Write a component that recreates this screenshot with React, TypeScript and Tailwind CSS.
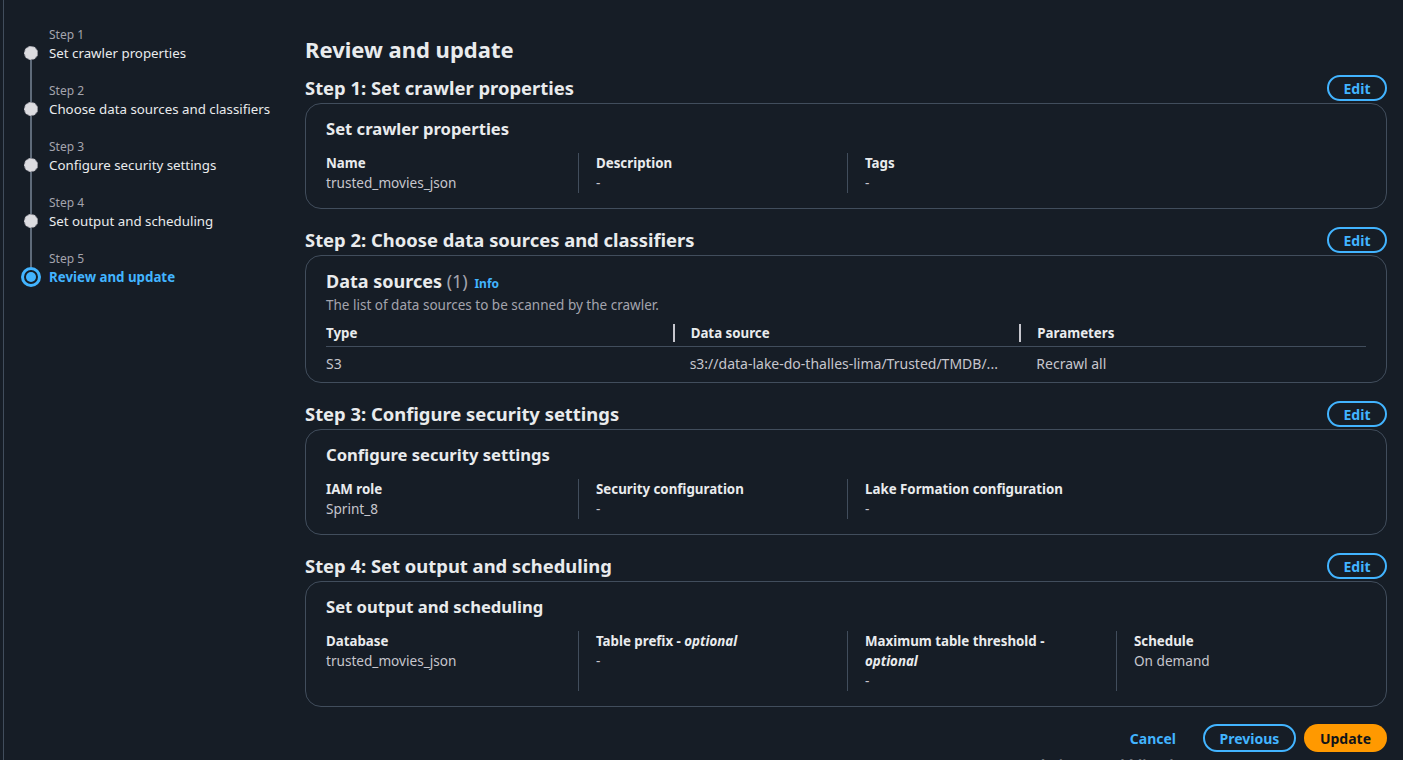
const steps = [
  { label: 'Step 1', title: 'Set crawler properties' },
  { label: 'Step 2', title: 'Choose data sources and classifiers' },
  { label: 'Step 3', title: 'Configure security settings' },
  { label: 'Step 4', title: 'Set output and scheduling' },
  { label: 'Step 5', title: 'Review and update' },
];

type KV = { label: React.ReactNode; value: string };

function KeyValues({ items }: { items: KV[] }) {
  return (
    <div className="mt-[13px] grid grid-cols-[252px_269px_269px_1fr]">
      {items.map((item, idx) => (
        <div key={idx} className={idx === 0 ? 'pr-[17px]' : 'border-l border-[#414d5c] pl-[17px] pr-[17px]'}>
          <div className="text-[13.3px] leading-[20px] font-bold text-[#e9ebed]">{item.label}</div>
          <div className="text-[13.6px] leading-[20px] text-[#c6c6cd]">{item.value}</div>
        </div>
      ))}
    </div>
  );
}

function Section({ title, children, first }: { title: string; children: React.ReactNode; first?: boolean }) {
  return (
    <section className={first ? 'mt-[10px]' : 'mt-[18px]'}>
      <div className="flex h-[26px] items-center justify-between">
        <h2 className="text-[18.4px] leading-[22px] font-bold text-[#e9ebed]">{title}</h2>
        <button className="h-[26px] w-[60px] rounded-full border-2 border-[#42b4ff] text-[14px] font-bold text-[#42b4ff]">
          Edit
        </button>
      </div>
      <div className="mt-[2px] rounded-[16px] border border-[#414d5c] px-[20px]">{children}</div>
    </section>
  );
}

function CardTitle({ children }: { children: React.ReactNode }) {
  return <h3 className="text-[16.6px] leading-[22px] font-bold text-[#e9ebed]">{children}</h3>;
}

export default function App() {
  return (
    <div
      className="relative flex h-[760px] w-full overflow-hidden bg-[#161d26] pl-[3px] text-[#c6c6cd]"
      style={{ fontFamily: '"Noto Sans", "Open Sans", Arial, sans-serif' }}
    >
      <div className="flex flex-1 border-l border-[#414d5c]">
        {/* Wizard navigation */}
        <nav className="w-[301px] shrink-0 pl-[17px] pt-[26px]">
          {steps.map((step, idx) => {
            const active = idx === steps.length - 1;
            return (
              <div key={step.label} className="flex gap-[8px]">
                <div className="flex w-[20px] flex-col items-center">
                  <div className={`h-[17px] w-[2px] ${idx > 0 ? 'bg-[#5f6b7a]' : ''}`} />
                  <div className="flex h-[20px] flex-col items-center">
                    {active ? (
                      <div className="flex h-[20px] w-[20px] items-center justify-center rounded-full border-[3px] border-[#42b4ff]">
                        <div className="h-[10px] w-[10px] rounded-full bg-[#42b4ff]" />
                      </div>
                    ) : (
                      <>
                        <div className={`h-[3px] w-[2px] ${idx > 0 ? 'bg-[#5f6b7a]' : ''}`} />
                        <div className="h-[14px] w-[14px] rounded-full border border-dashed border-[#9a9aa3] bg-[#dcdce0]" />
                        <div className="h-[3px] w-[2px] bg-[#5f6b7a]" />
                      </>
                    )}
                  </div>
                  {!active && <div className="h-[19px] w-[2px] bg-[#5f6b7a]" />}
                </div>
                <div>
                  <div className="text-[12px] leading-[17px] text-[#a4a4ad]">{step.label}</div>
                  <div
                    className={`text-[13.3px] leading-[20px] ${active ? 'font-bold text-[#42b4ff]' : 'text-[#e9ebed]'}`}
                  >
                    {step.title}
                  </div>
                  {!active && <div className="h-[19px]" />}
                </div>
              </div>
            );
          })}
        </nav>

        {/* Main content */}
        <main className="w-[1082px] pt-[33px]">
          <h1 className="text-[22px] leading-[32px] font-bold text-[#e9ebed]">Review and update</h1>

          <Section title="Step 1: Set crawler properties" first>
            <div className="pt-[14px] pb-[15px]">
              <CardTitle>Set crawler properties</CardTitle>
              <KeyValues
                items={[
                  { label: 'Name', value: 'trusted_movies_json' },
                  { label: 'Description', value: '-' },
                  { label: 'Tags', value: '-' },
                ]}
              />
            </div>
          </Section>

          <Section title="Step 2: Choose data sources and classifiers">
            <div className="pt-[14px] pb-[2px]">
              <h3 className="text-[18px] leading-[22px] font-bold text-[#e9ebed]">
                Data sources <span className="font-normal text-[#a4a4ad]">(1)</span>{' '}
                <span className="ml-[2px] text-[12px] font-bold text-[#42b4ff]">Info</span>
              </h3>
              <p className="text-[13.5px] leading-[20px] text-[#a4a4ad]">
                The list of data sources to be scanned by the crawler.
              </p>
              <table className="mt-[4px] w-full table-fixed text-left text-[14px] leading-[20px]">
                <thead>
                  <tr className="border-b border-[#414d5c]">
                    <th className="pt-[4px] pb-[3px] text-[13.3px] font-bold text-[#e9ebed]">Type</th>
                    <th className="pt-[4px] pb-[3px] text-[13.3px] font-bold text-[#e9ebed]">
                      <div className="flex items-center">
                        <span className="mr-[16px] h-[18px] w-[2px] bg-[#c6c6cd]" />
                        Data source
                      </div>
                    </th>
                    <th className="pt-[4px] pb-[3px] text-[13.3px] font-bold text-[#e9ebed]">
                      <div className="flex items-center">
                        <span className="mr-[16px] h-[18px] w-[2px] bg-[#c6c6cd]" />
                        Parameters
                      </div>
                    </th>
                  </tr>
                </thead>
                <tbody>
                  <tr>
                    <td className="pt-[7px] pb-[6px]">S3</td>
                    <td className="pt-[7px] pb-[6px] pl-[17px]">s3://data-lake-do-thalles-lima/Trusted/TMDB/...</td>
                    <td className="pt-[7px] pb-[6px] pl-[17px]">Recrawl all</td>
                  </tr>
                </tbody>
              </table>
            </div>
          </Section>

          <Section title="Step 3: Configure security settings">
            <div className="pt-[14px] pb-[15px]">
              <CardTitle>Configure security settings</CardTitle>
              <KeyValues
                items={[
                  { label: 'IAM role', value: 'Sprint_8' },
                  { label: 'Security configuration', value: '-' },
                  { label: 'Lake Formation configuration', value: '-' },
                ]}
              />
            </div>
          </Section>

          <Section title="Step 4: Set output and scheduling">
            <div className="pt-[14px] pb-[15px]">
              <CardTitle>Set output and scheduling</CardTitle>
              <KeyValues
                items={[
                  { label: 'Database', value: 'trusted_movies_json' },
                  {
                    label: (
                      <>
                        Table prefix - <em>optional</em>
                      </>
                    ),
                    value: '-',
                  },
                  {
                    label: (
                      <>
                        Maximum table threshold - <em>optional</em>
                      </>
                    ),
                    value: '-',
                  },
                  { label: 'Schedule', value: 'On demand' },
                ]}
              />
            </div>
          </Section>

          <div className="mt-[17px] flex items-center justify-end">
            <button className="mr-[27px] text-[14px] font-bold text-[#42b4ff]">Cancel</button>
            <button className="mr-[8px] h-[28px] w-[93px] rounded-full border-2 border-[#42b4ff] text-[14px] font-bold text-[#42b4ff]">
              Previous
            </button>
            <button className="h-[28px] w-[83px] rounded-full bg-[#ff9900] text-[14px] font-bold text-[#0f141a]">
              Update
            </button>
          </div>
        </main>
      </div>

      {/* OS watermark */}
      <div className="absolute left-[1036px] top-[752px] text-[22px] leading-[28px] text-[#6b7078]">Ativar o Windows</div>
    </div>
  );
}
